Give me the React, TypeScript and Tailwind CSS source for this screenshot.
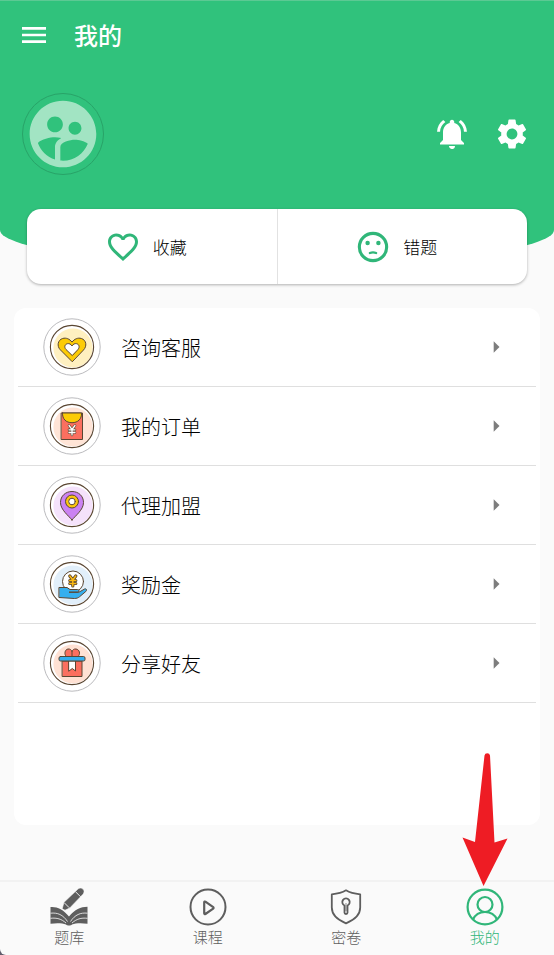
import type { ReactNode } from 'react';
import {
  MdArrowRight,
  MdFavoriteBorder,
  MdMenu,
  MdNotificationsActive,
  MdSettings,
  MdSupervisedUserCircle,
} from 'react-icons/md';

const INK = '#5a4632';

function SadFace() {
  return (
    <svg viewBox="0 0 24 24" className="size-9 fill-[#30b679]" aria-hidden="true">
      <circle cx="12" cy="12" r="9.1" fill="none" stroke="#30b679" strokeWidth="2.1" />
      <circle cx="8.4" cy="9.4" r="1.5" />
      <circle cx="15.6" cy="9.4" r="1.5" />
      <path d="M9.900 16q2.100-.9 4.200 0" fill="none" stroke="#30b679" strokeWidth="1.5" strokeLinecap="round" />
    </svg>
  );
}

function Badge({ tint, children }: { tint: string; children: ReactNode }) {
  return (
    <svg viewBox="0 0 58 58" className="size-[58px] shrink-0" aria-hidden="true">
      <circle cx="29" cy="29" r="28.2" fill="#fff" stroke="#a9a9ad" strokeWidth="0.8" />
      <circle cx="30" cy="30" r="19.6" fill={tint} />
      <circle cx="29" cy="29" r="21.6" fill="none" stroke={INK} strokeWidth="1.1" />
      <g stroke={INK} strokeWidth="1" strokeLinejoin="round" strokeLinecap="round">
        {children}
      </g>
    </svg>
  );
}

const rows: { label: string; icon: ReactNode }[] = [
  {
    label: '咨询客服',
    icon: (
      <Badge tint="#fff0c0">
        <path d="M29 43.5 17.3 31.8C13.6 28 14.8 22 19.6 20.5c3.600-1.100 7 .5 9.400 3.600 2.400-3.100 5.800-4.700 9.400-3.600 4.800 1.500 6 7.500 2.300 11.300z" fill="#fccb05" />
        <path d="M29 37.300 23 31.500c-2.200-2.400-1-5.300 1.400-5.800 1.900-.4 3.500.5 4.600 2.300 1.100-1.800 2.700-2.700 4.600-2.300 2.400.5 3.600 3.400 1.400 5.800z" fill="#fff" />
      </Badge>
    ),
  },
  {
    label: '我的订单',
    icon: (
      <Badge tint="#ffe4d6">
        <path d="M18.500 16h21v26.500h-21z" fill="#fb6f5f" />
        <path d="M19.500 16h19c.3 6-3.500 9.700-9.500 9.700S19.200 22 19.500 16z" fill="#fccb05" />
        <path d="m26 28.500 3 4 3-4m-6 4.300h6m-6 2.700h6m-3-2.700V38" fill="none" stroke="#5a4632" strokeWidth="2.600" />
        <path d="m26 28.500 3 4 3-4m-6 4.300h6m-6 2.700h6m-3-2.700V38" fill="none" stroke="#fff" strokeWidth="1.300" />
      </Badge>
    ),
  },
  {
    label: '代理加盟',
    icon: (
      <Badge tint="#f5e2fb">
        <path d="M29 44c-3-4-11.500-10-11.500-17.500C17.500 20 22.500 15.500 29 15.500S40.500 20 40.500 26.500C40.500 34 32 40 29 44z" fill="#cb82f2" />
        <circle cx="29" cy="25.500" r="6.500" fill="#fcc60d" />
        <circle cx="29" cy="25.500" r="3.300" fill="#fff" />
      </Badge>
    ),
  },
  {
    label: '奖励金',
    icon: (
      <Badge tint="#e2effa">
        <circle cx="30" cy="26.500" r="10.500" fill="#fff" />
        <path d="m26.800 21 3 4 3-4m-6 4.500h6m-6 3h6m-3-3V31" fill="none" strokeWidth="3.200" />
        <path d="m26.800 21 3 4 3-4m-6 4.500h6m-6 3h6m-3-3V31" fill="none" stroke="#fcb912" strokeWidth="1.500" />
        <path d="M16.300 32.500H24l3 2h7.500c2 .2 2 2.500 0 2.700h-8.500 10l5.500-3.200c2-.7 2.800 1 1.300 2.500L36.500 41.800c-1.500 1.200-3 1.700-5 1.700L16.300 42.500z" fill="#36afee" />
      </Badge>
    ),
  },
  {
    label: '分享好友',
    icon: (
      <Badge tint="#ffe1d3">
        <path d="M29 22.500h-5.500c-2.500-1.500-2-7 1.500-7.500 2-.3 3.500 1 4 2.500.5-1.500 2-2.800 4-2.500 3.500.5 5 5 2 7.500z" fill="#fb6f5f" />
        <path d="M29 17.500v5" fill="none" />
        <path d="M19.500 27h19.500v15.500H19.500z" fill="#fb6f5f" />
        <path d="M26 27h6.500v10l-3.200-2.500L26 37z" fill="#fff" />
        <rect x="16" y="22.500" width="26" height="4.500" rx="1.500" fill="#36afee" />
      </Badge>
    ),
  },
];

function BookIcon() {
  return (
    <svg viewBox="0 0 38 38" className="size-[38px]" aria-hidden="true">
      <path
        d="M.5 19c6.500-.5 12.500 2 18.500 9.500C25 21.500 30.500 19 37.500 18.800v17c-7-1-12-.5-15.500.7-1 1.300-5 1.300-6 0-3.500-1.200-8.500-1.700-15.500-.7z"
        fill="currentColor"
      />
      <path
        d="M.5 25.200c7-.8 12.500 1.500 17 8.300M37.500 25.200c-7-.8-12.500 1.500-17 8.300M.5 30.300c6.500-.7 11 .7 15.500 4.700M37.500 30.300c-6.500-.7-11 .7-15.500 4.700"
        fill="none"
        stroke="#fafafa"
        strokeWidth="0.800"
      />
      <path
        d="m12.200 20.800 1.800-6.500L27.500 1.400c1.800-1.800 4-1.800 5.500-.3s1.500 3.700-.3 5.500L19.800 19.900l-4.800 2.300z"
        fill="currentColor"
        stroke="#fafafa"
        strokeWidth="0.600"
      />
      <path d="m25.500 3.700 5.100 5.100M14.300 14.800l4.900 4.900" fill="none" stroke="#fafafa" strokeWidth="0.900" />
    </svg>
  );
}

function PlayIcon() {
  return (
    <svg viewBox="0 0 38 38" className="size-[38px]" fill="none" stroke="currentColor" strokeWidth="2" strokeLinejoin="round" aria-hidden="true">
      <circle cx="19" cy="19" r="17.500" />
      <path d="M15.200 14.300v11c0 .7.600 1 1.200.7l7.800-5.400c.5-.4.500-1 0-1.400l-7.800-5.500c-.6-.4-1.200-.1-1.200.6z" strokeWidth="2.200" />
    </svg>
  );
}

function ShieldIcon() {
  return (
    <svg viewBox="0 0 38 38" className="size-[38px]" fill="none" stroke="currentColor" strokeWidth="1.800" strokeLinejoin="round" aria-hidden="true">
      <path d="M19 2.300c4 2.500 8.500 3.500 14.200 4v13.200c0 7.500-6 12.500-14.200 15.800C10.800 32 4.800 27 4.800 19.500V6.300C10.500 5.800 15 4.800 19 2.300z" />
      <path d="M17.500 17.500a3.700 3.700 0 1 1 3 0v7.300c0 1.600-3 1.600-3 0z" />
      <path d="M19 15v8" strokeWidth="0.700" />
    </svg>
  );
}

function PersonIcon() {
  return (
    <svg viewBox="0 0 38 38" className="size-[38px]" fill="none" stroke="currentColor" strokeWidth="2.200" aria-hidden="true">
      <circle cx="19" cy="19" r="17.400" />
      <circle cx="19" cy="16.500" r="7.500" />
      <path d="M7 31.500c2.200-4.800 6.500-7.500 12-7.500s9.800 2.700 12 7.500" />
    </svg>
  );
}

const tabs: { label: string; icon: ReactNode }[] = [
  { label: '题库', icon: <BookIcon /> },
  { label: '课程', icon: <PlayIcon /> },
  { label: '密卷', icon: <ShieldIcon /> },
  { label: '我的', icon: <PersonIcon /> },
];

function Pointer() {
  return (
    <svg viewBox="0 0 46 134" className="pointer-events-none absolute bottom-[69px] left-1/2 z-10 h-[134px] w-[46px] -translate-x-1/2 fill-[#ee1c24]" aria-hidden="true">
      <path d="M22.500 3.500a2.800 2.800 0 0 1 5.500 0L32.500 90.500 45.500 86.500 21.500 134 .5 85.500 13 90z" />
    </svg>
  );
}

export default function App() {
  return (
    <div className="bg-[#5f5c6b]">
      <div className="flex min-h-screen flex-col overflow-hidden rounded-bl-md bg-[#fafafa] font-['Noto_Sans_CJK_SC',sans-serif] font-light text-black">
        <header className="h-[265px] rounded-b-[50%_35px] border-t border-[#5cc993] bg-[#30c27c] text-white">
          <div className="flex h-[68px] items-center gap-6 px-[18px]">
            <button type="button" aria-label="菜单">
              <MdMenu className="size-8" />
            </button>
            <h1 className="text-2xl font-medium">我的</h1>
          </div>
          <div className="flex items-center pt-6 pr-6 pl-[22px]">
            <button type="button" aria-label="头像" className="rounded-full border border-[#28a368]">
              <MdSupervisedUserCircle className="size-20 text-[#a2e4c3]" />
            </button>
            <button type="button" aria-label="通知" className="ml-auto">
              <MdNotificationsActive className="size-9" />
            </button>
            <button type="button" aria-label="设置" className="ml-6">
              <MdSettings className="size-9" />
            </button>
          </div>
        </header>

        <main className="-mt-14 flex grow flex-col px-[14px]">
          <div className="mx-[13px] flex h-[75px] divide-x divide-[#e2e2e2] rounded-[14px] bg-white text-[17px] shadow-[0_1px_3px_rgba(0,0,0,0.3)]">
            <button type="button" className="flex flex-1 items-center justify-center gap-3 pr-3">
              <MdFavoriteBorder className="size-9 text-[#30b679]" />
              收藏
            </button>
            <button type="button" className="flex flex-1 items-center justify-center gap-3 pr-3">
              <SadFace />
              错题
            </button>
          </div>

          <ul className="mt-6 mb-[55px] grow rounded-xl bg-white px-1">
            {rows.map((row) => (
              <li key={row.label} className="h-[79px] border-b border-[#dfdfdf]">
                <button type="button" className="flex size-full items-center gap-5 pr-[26px] pl-[25px] text-xl">
                  {row.icon}
                  <span className="pt-0.5">{row.label}</span>
                  <MdArrowRight className="ml-auto size-7 text-[#7d7d7d]" />
                </button>
              </li>
            ))}
          </ul>
        </main>

        <nav className="flex h-[75px] border-t-2 border-[#f2f2f2] text-[15px] leading-5 text-[#5e5e5e]">
          {tabs.map((tab) => (
            <a
              key={tab.label}
              href="#"
              aria-current={tab.label === '我的' ? 'page' : undefined}
              className="relative flex flex-1 flex-col items-center gap-px pt-[6px] aria-[current=page]:text-[#30b679]"
            >
              {tab.icon}
              {tab.label}
              {tab.label === '我的' && <Pointer />}
            </a>
          ))}
        </nav>
      </div>
    </div>
  );
}
